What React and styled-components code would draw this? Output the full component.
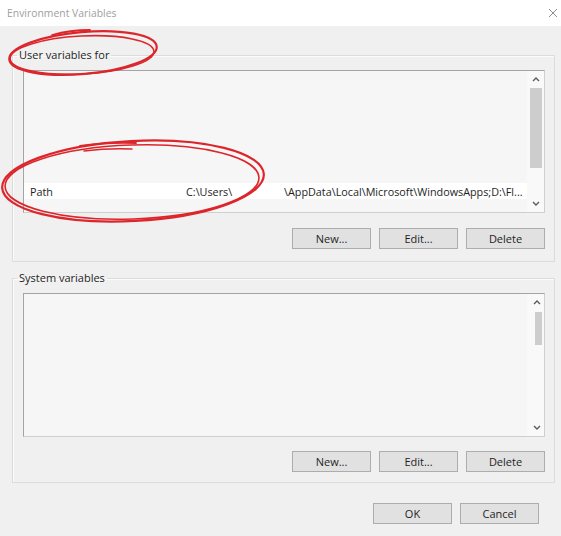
import React from "react";
import styled, { createGlobalStyle } from "styled-components";

const GlobalStyle = createGlobalStyle`
  html, body {
    margin: 0;
    padding: 0;
    background: #f0f0f0;
  }
  body {
    font-family: "Open Sans", "Liberation Sans", sans-serif;
  }
`;

const Window = styled.div`
  position: relative;
  width: 561px;
  height: 536px;
  background: #f0f0f0;
  display: flex;
  flex-direction: column;
  overflow: hidden;
  font-size: 11px;
  color: #1e1e1e;
`;

const TitleBar = styled.div`
  flex: none;
  height: 26px;
  background: #fff;
  display: flex;
  align-items: center;
  justify-content: space-between;
  padding: 0 3px 0 7px;
  color: #a0a0a0;
  font-size: 10.4px;
`;

const Body = styled.div`
  display: flex;
  flex-direction: column;
  padding: 0 6px 0 12px;
`;

const Group = styled.fieldset`
  margin: ${(p) => p.$top}px 0 0;
  padding: 0 9px ${(p) => p.$bottom}px 10px;
  border: 1px solid #dcdcdc;
  box-shadow: inset 1px 1px 0 #fbfbfb;
  min-width: 0;
`;

const Legend = styled.legend`
  margin-left: -6px;
  padding: 0 2px;
  font-size: 11px;
  line-height: 16px;
  color: #1e1e1e;
`;

const List = styled.div`
  box-sizing: border-box;
  margin-top: 7px;
  height: ${(p) => p.$height}px;
  border: 1px solid #a4a4a4;
  border-right-color: #cfcfcf;
  border-bottom-color: #cfcfcf;
  background: #f6f6f6;
  display: flex;
  overflow: hidden;
`;

const Rows = styled.div`
  flex: 1;
  display: flex;
  flex-direction: column;
  min-width: 0;
`;

const Row = styled.div`
  flex: none;
  height: 16px;
  display: flex;
  align-items: center;
  padding-left: 6px;
  background: ${(p) => (p.$blank ? "transparent" : "#fff")};
  white-space: nowrap;
  font-size: 10.8px;
`;

const NameCell = styled.span`
  width: 156px;
  flex: none;
`;

const ValueHead = styled.span`
  display: inline-block;
  width: 98px;
`;

const Scrollbar = styled.div`
  width: 17px;
  flex: none;
  display: flex;
  flex-direction: column;
  background: #f9f9f9;
`;

const Arrow = styled.div`
  height: 17px;
  flex: none;
  display: flex;
  align-items: center;
  justify-content: center;
  padding-left: ${(p) => p.$shift}px;
`;

const Track = styled.div`
  flex: 1;
  padding: ${(p) => p.$top}px 2px 0 ${(p) => p.$left}px;
`;

const Thumb = styled.div`
  width: ${(p) => p.$width}px;
  height: ${(p) => p.$height}px;
  background: #cdcdcd;
`;

const ButtonRow = styled.div`
  display: flex;
  justify-content: flex-end;
  gap: 8px;
  margin-top: ${(p) => p.$top}px;
  padding-right: ${(p) => p.$right || 0}px;
`;

const Button = styled.button`
  width: 79px;
  height: 21px;
  padding: 0;
  border: 1px solid #adadad;
  background: #e1e1e1;
  font-family: inherit;
  font-size: 11px;
  color: #1e1e1e;
`;

const Marks = styled.svg`
  position: absolute;
  inset: 0;
  pointer-events: none;
`;

const Chevron = ({ down }) => (
  <svg width="8" height="5" viewBox="0 0 8 5">
    <path
      d={down ? "M1 1 L4 4 L7 1" : "M1 4 L4 1 L7 4"}
      fill="none"
      stroke="#5a5a5a"
      strokeWidth="1.4"
    />
  </svg>
);

const ScrollBar = ({ thumbTop, thumbHeight, thumbLeft, thumbWidth, shift = 0 }) => (
  <Scrollbar>
    <Arrow $shift={shift}>
      <Chevron />
    </Arrow>
    <Track $top={thumbTop} $left={thumbLeft}>
      <Thumb $width={thumbWidth} $height={thumbHeight} />
    </Track>
    <Arrow $shift={shift}>
      <Chevron down />
    </Arrow>
  </Scrollbar>
);

const userRows = [
  ...Array.from({ length: 7 }, () => null),
  { name: "Path", head: "C:\\Users\\", tail: "\\AppData\\Local\\Microsoft\\WindowsApps;D:\\Fl..." },
  null,
];

const App = () => (
  <Window>
    <GlobalStyle />
    <TitleBar>
      <span>Environment Variables</span>
      <svg width="10" height="10" viewBox="0 0 10 10">
        <path d="M1 1 L9 9 M9 1 L1 9" stroke="#8c8c8c" strokeWidth="1" />
      </svg>
    </TitleBar>
    <Body>
      <Group $top={21} $bottom={12}>
        <Legend>User variables for</Legend>
        <List $height={143}>
          <Rows>
            {userRows.map((r, i) =>
              r ? (
                <Row key={i}>
                  <NameCell>{r.name}</NameCell>
                  <span>
                    <ValueHead>{r.head}</ValueHead>
                    {r.tail}
                  </span>
                </Row>
              ) : (
                <Row key={i} $blank />
              )
            )}
          </Rows>
          <ScrollBar thumbTop={0} thumbHeight={80} thumbLeft={3} thumbWidth={12} />
        </List>
        <ButtonRow $top={15}>
          <Button>New...</Button>
          <Button>Edit...</Button>
          <Button>Delete</Button>
        </ButtonRow>
      </Group>
      <Group $top={8} $bottom={10}>
        <Legend>System variables</Legend>
        <List $height={144}>
          <Rows />
          <ScrollBar thumbTop={1} thumbHeight={33} thumbLeft={8} thumbWidth={7} shift={2} />
        </List>
        <ButtonRow $top={14}>
          <Button>New...</Button>
          <Button>Edit...</Button>
          <Button>Delete</Button>
        </ButtonRow>
      </Group>
    </Body>
    <ButtonRow $top={20} $right={22}>
      <Button>OK</Button>
      <Button>Cancel</Button>
    </ButtonRow>
    <Marks width="561" height="536" viewBox="0 0 561 536">
      <g fill="none" stroke="#dc262c" strokeLinecap="round">
        <ellipse cx="83" cy="53" rx="74" ry="21" transform="rotate(-5 83 53)" strokeWidth="2.2" />
        <ellipse cx="82" cy="55" rx="72" ry="19" transform="rotate(-3 82 55)" strokeWidth="1.6" />
        <path d="M52 35 Q70 30 90 30" strokeWidth="1.8" />
        <ellipse cx="133" cy="181" rx="131" ry="40" transform="rotate(-3 133 181)" strokeWidth="2.2" />
        <ellipse cx="132" cy="182" rx="127" ry="37" transform="rotate(-2 132 182)" strokeWidth="1.6" />
        <path d="M80 146 Q105 142 136 143" strokeWidth="1.8" />
        <path d="M84 151 Q108 148 132 149" strokeWidth="1.4" />
      </g>
    </Marks>
  </Window>
);

export default App;
